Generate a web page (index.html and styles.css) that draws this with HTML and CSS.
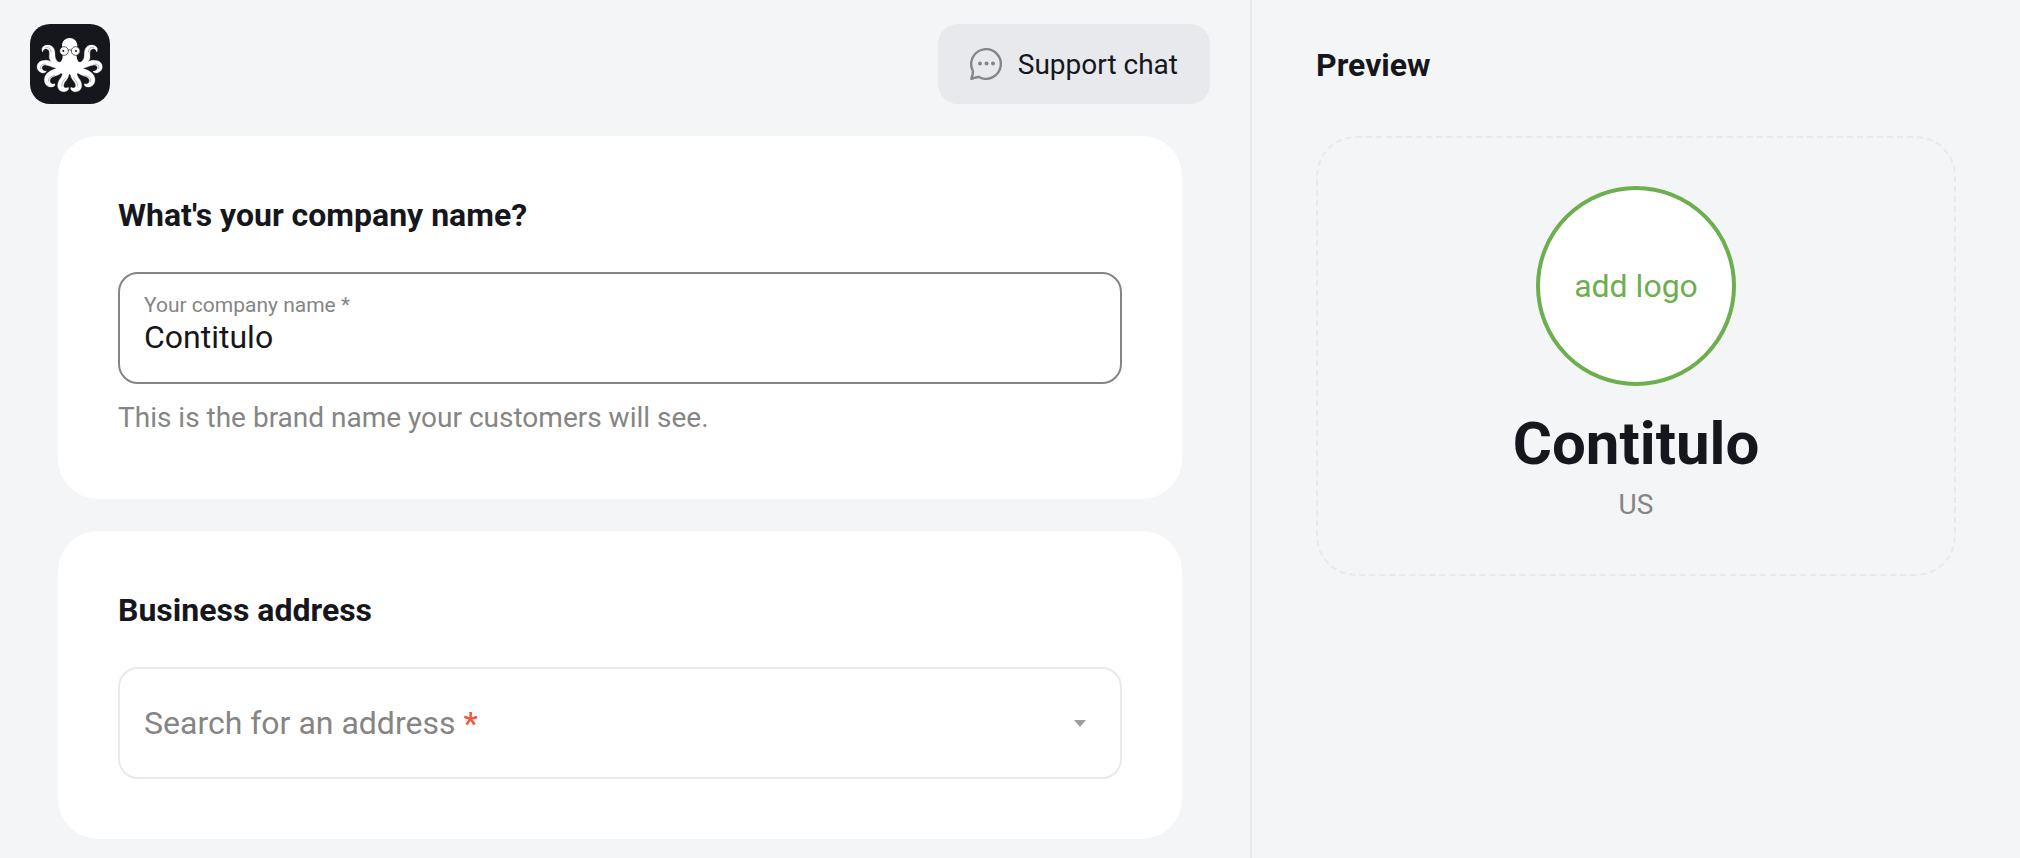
FILE: index.html
```html
<!DOCTYPE html>
<html lang="en">
<head>
  <meta charset="utf-8">
  <meta name="viewport" content="width=device-width, initial-scale=1">
  <title>Company profile</title>
  <link rel="stylesheet" href="styles.css">
</head>
<body>
  <div class="layout">
    <div class="editor">
      <header class="topbar">
        <a class="logo" href="#" aria-label="Home">
          <svg viewBox="30 27 240 240" aria-hidden="true">
            <defs>
              <g id="arms">
                <path d="M150 132 L125 143 C114 143 106 136 105 122 C105 110 104 102 98 96 C91 89 79 89 72 93 C65 97 64 105 68 111 C69 103 75 99 81 102 C91 105 88 119 88 128 C89 134 92 138 96 141 C84 134 65 134 56 143 C47 153 51 169 65 173 C71 175 77 173 79 169 C68 168 63 161 67 154 C73 146 88 153 99 157 L110 160 C94 165 78 173 74 188 C70 203 80 216 93 216 C102 216 107 211 104 206 C96 210 88 203 90 195 C93 184 108 184 118 178 C124 174 127 174 127 179 C124 190 113 196 113 211 C113 224 122 231 133 230 C143 229 148 223 145 217 C137 222 129 217 131 209 C133 200 145 192 146 181 L150 173 Z" fill="#fff" stroke="#fff" stroke-width="1"/>
                <path d="M76 98 C85 95 93 101 93 112 M62 162 C60 150 68 146 78 148 M86 200 C84 188 94 184 104 181 M126 214 C123 204 132 197 138 188" fill="none" stroke="#16171c" stroke-width="1"/>
              </g>
            </defs>
            <path d="M149 69 C136 69 126 79 126 92 C126 104 128 110 128 122 C128 136 122 143 108 146 L116 166 L149 176 L182 166 L190 146 C176 143 170 136 170 122 C170 112 172 104 172 92 C172 79 162 69 149 69 Z" fill="#fff"/>
            <use href="#arms"/>
            <use href="#arms" transform="translate(298 0) scale(-1 1)"/>
            <g fill="#fff" stroke="#16171c" stroke-width="2">
              <circle cx="132" cy="108" r="13"/>
              <circle cx="167" cy="108" r="13"/>
              <path d="M144 106 Q149 103 155 106" fill="none"/>
            </g>
            <circle cx="130" cy="108" r="3" fill="#16171c"/>
            <circle cx="168" cy="108" r="3" fill="#16171c"/>
          </svg>
        </a>
        <button class="support" type="button">
          <svg class="support-icon" viewBox="0 0 32 32" aria-hidden="true">
            <path d="M1.3 30.8 C2.6 26.5 3.6 24.6 2.7 22.4 A14.8 14.8 0 1 1 9.4 29.2 C7.2 28.3 5.2 30.2 1.3 30.8 Z" fill="none" stroke="#858585" stroke-width="2.4" stroke-linejoin="round"/>
            <circle cx="10" cy="15.5" r="2" fill="#858585"/>
            <circle cx="16.5" cy="15.5" r="2" fill="#858585"/>
            <circle cx="23" cy="15.5" r="2" fill="#858585"/>
          </svg>
          Support chat
        </button>
      </header>
      <main class="cards">
        <section class="card">
          <h2 class="title">What's your company name?</h2>
          <div class="field field-filled">
            <label class="field-label" for="company">Your company name *</label>
            <input class="field-input" id="company" type="text" value="Contitulo" aria-describedby="company-hint" required>
          </div>
          <p class="hint" id="company-hint">This is the brand name your customers will see.</p>
        </section>
        <section class="card">
          <h2 class="title">Business address</h2>
          <div class="field field-search">
            <label class="search-label" for="address">Search for an address <span class="required">*</span></label>
            <input class="field-input" id="address" type="text" role="combobox" aria-expanded="false" required>
            <svg class="caret" viewBox="0 0 12 7" aria-hidden="true"><path d="M0 0H12L6 7Z" fill="#9d9d9e"/></svg>
          </div>
        </section>
      </main>
    </div>
    <aside class="preview">
      <h2 class="preview-title">Preview</h2>
      <div class="preview-card">
        <button class="add-logo" type="button">add logo</button>
        <p class="brand">Contitulo</p>
        <p class="country">US</p>
      </div>
    </aside>
  </div>
</body>
</html>
```
FILE: styles.css
```css
*,
*::before,
*::after {
  box-sizing: border-box;
}

body {
  margin: 0;
  background: #f4f5f7;
  color: #16171c;
  font-family: Roboto, "Liberation Sans", sans-serif;
  font-size: 32px;
}

button,
input {
  color: inherit;
  font: inherit;
}

h2,
p {
  margin: 0;
}

.layout {
  display: grid;
  grid-template-columns: minmax(0, 125fr) minmax(0, 77fr);
  min-height: 100vh;
}

.topbar {
  display: flex;
  align-items: center;
  justify-content: space-between;
  padding: 24px 40px 32px 30px;
}

.logo {
  display: block;
  width: 80px;
  height: 80px;
  border-radius: 20px;
  background: #16171c;
}

.logo svg {
  display: block;
  width: 100%;
}

.support {
  display: flex;
  align-items: center;
  gap: 16px;
  height: 80px;
  padding: 0 32px;
  border: 0;
  border-radius: 20px;
  background: #e8e9ed;
  font-size: 28px;
}

.support-icon {
  width: 32px;
  height: 32px;
}

.cards {
  display: flex;
  flex-direction: column;
  gap: 32px;
  padding: 0 68px 19px 58px;
}

.card {
  padding: 60px;
  border-radius: 40px;
  background: #fff;
}

.title {
  margin-bottom: 38px;
  font-size: 32px;
  font-weight: 700;
  line-height: 38px;
}

.field {
  position: relative;
  display: flex;
  height: 112px;
  padding: 0 24px;
  border: 2px solid #e8e9ed;
  border-radius: 20px;
}

.field-filled {
  flex-direction: column;
  padding-top: 18px;
  border-color: #858585;
}

.field-label {
  color: #858585;
  font-size: 21px;
  line-height: 26px;
}

.field-input {
  width: 100%;
  height: 38px;
  padding: 0;
  border: 0;
  outline: 0;
  background: transparent;
}

.field-search {
  align-items: center;
  padding-right: 34px;
}

.search-label {
  position: absolute;
  color: #858585;
  pointer-events: none;
}

.required {
  color: #f1553b;
  font-weight: 500;
}

.caret {
  flex: none;
  width: 12px;
  height: 7px;
}

.hint {
  margin-top: 12px;
  color: #858585;
  font-size: 28px;
  line-height: 43px;
}

.preview {
  padding: 46px 64px;
  border-left: 2px solid #e8e9ed;
}

.preview-title {
  margin-bottom: 52px;
  font-size: 32px;
  font-weight: 700;
  line-height: 38px;
}

.preview-card {
  display: flex;
  flex-direction: column;
  align-items: center;
  padding: 48px;
  border: 2px dashed #e8e9ea;
  border-radius: 40px;
}

.add-logo {
  width: 200px;
  height: 200px;
  padding: 0;
  border: 4px solid #6dae4f;
  border-radius: 50%;
  background: #fff;
  color: #6dae4f;
}

.brand {
  margin-top: 24px;
  font-size: 60px;
  font-weight: 700;
  line-height: 68px;
}

.country {
  margin-top: 6px;
  color: #858585;
  font-size: 28px;
  line-height: 42px;
}
```
